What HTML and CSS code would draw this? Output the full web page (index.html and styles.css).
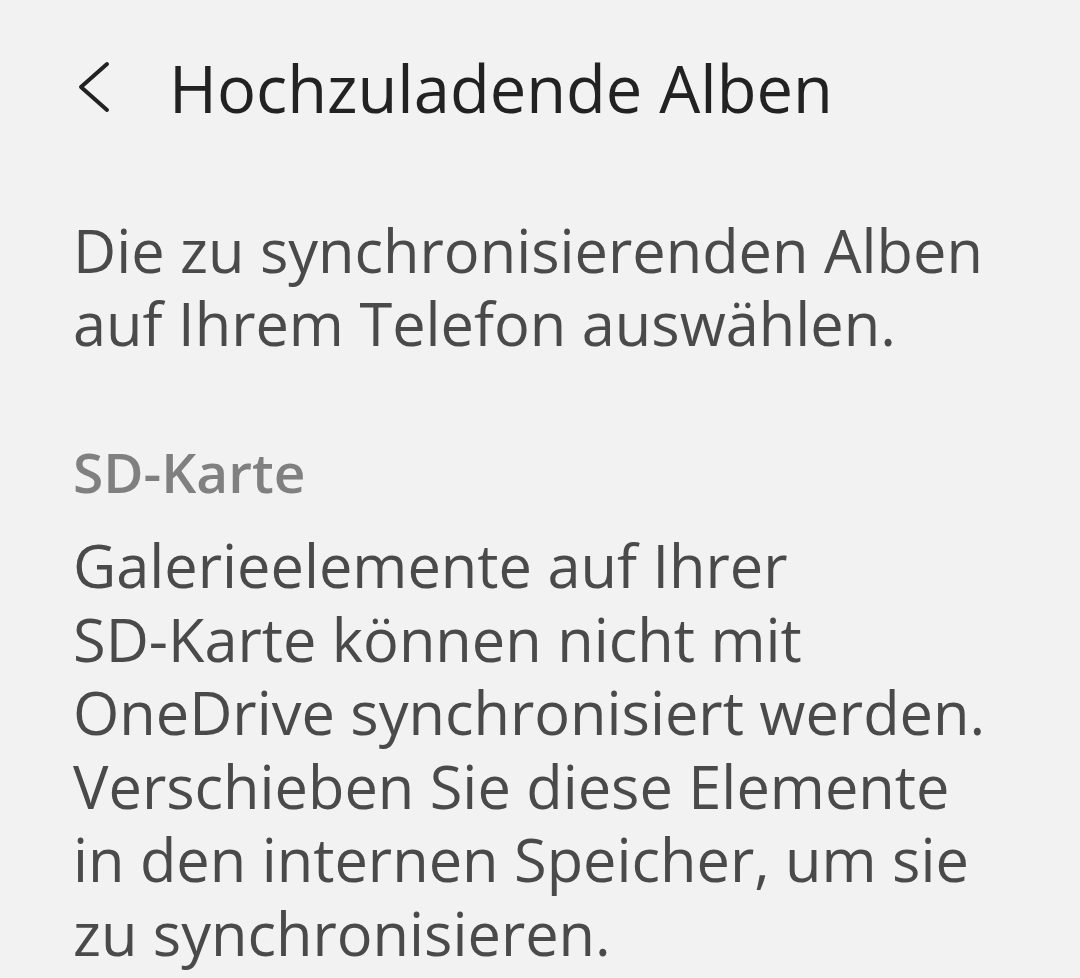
FILE: index.html
```html
<!DOCTYPE html>
<html lang="de">
<head>
<meta charset="utf-8">
<link rel="stylesheet" href="styles.css">
</head>
<body>
<header class="appbar">
  <svg class="back" width="40" height="60" viewBox="0 0 40 60"><polyline points="31,7 5,30 31,53" fill="none" stroke="#222" stroke-width="4" stroke-linecap="round" stroke-linejoin="round"/></svg>
  <h1 class="title">Hochzuladende Alben</h1>
</header>
<main class="content">
  <p class="intro">Die zu synchronisierenden Alben<br>auf Ihrem Telefon auswählen.</p>
  <h2 class="section">SD-Karte</h2>
  <p class="body">Galerieelemente auf Ihrer<br>SD-Karte können nicht mit<br>OneDrive synchronisiert werden.<br>Verschieben Sie diese Elemente<br>in den internen Speicher, um sie<br>zu synchronisieren.</p>
</main>
</body>
</html>
```
FILE: styles.css
```css
html, body { margin: 0; padding: 0; }
body {
  background: #f2f2f2;
  font-family: "Open Sans", "Noto Sans", sans-serif;
  width: 1080px;
  height: 978px;
  overflow: hidden;
}
.appbar {
  display: flex;
  align-items: center;
  height: 180px;
  padding-left: 76px;
}
.back { flex: none; margin-bottom: 7px; }
.title {
  margin: 0 0 4px 53px;
  font-weight: 400;
  font-size: 65px;
  color: #222;
}
.content {
  padding: 33px 10px 0 73px;
}
.intro {
  margin: 0;
  font-size: 59.5px;
  line-height: 73px;
  color: #4a4a4a;
  white-space: nowrap;
}
.section {
  margin: 78px 0 0;
  font-size: 55px;
  font-weight: 600;
  color: #808080;
  line-height: 70px;
}
.body {
  margin: 21px 0 0;
  font-size: 59.5px;
  line-height: 73.5px;
  color: #4a4a4a;
  white-space: nowrap;
}
```
